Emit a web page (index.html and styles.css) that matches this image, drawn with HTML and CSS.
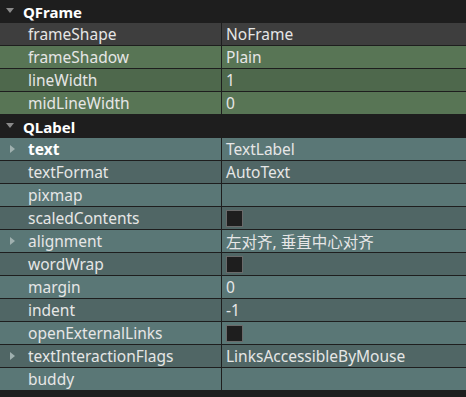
FILE: index.html
```html
<!DOCTYPE html>
<html lang="en">
<head>
  <meta charset="UTF-8">
  <title>Property Editor</title>
  <link rel="stylesheet" href="styles.css">
</head>
<body>
  <div class="props">
    <div class="group">
      <span class="caret-down"></span>
      <span class="group-name">QFrame</span>
    </div>
    <div class="row gray">
      <div class="name">frameShape</div>
      <div class="value">NoFrame</div>
    </div>
    <div class="row green">
      <div class="name">frameShadow</div>
      <div class="value">Plain</div>
    </div>
    <div class="row green dark">
      <div class="name">lineWidth</div>
      <div class="value">1</div>
    </div>
    <div class="row green">
      <div class="name">midLineWidth</div>
      <div class="value">0</div>
    </div>

    <div class="group">
      <span class="caret-down"></span>
      <span class="group-name">QLabel</span>
    </div>
    <div class="row teal">
      <div class="name bold"><span class="caret-right"></span>text</div>
      <div class="value">TextLabel</div>
    </div>
    <div class="row teal dark">
      <div class="name">textFormat</div>
      <div class="value">AutoText</div>
    </div>
    <div class="row teal">
      <div class="name">pixmap</div>
      <div class="value"></div>
    </div>
    <div class="row teal dark">
      <div class="name">scaledContents</div>
      <div class="value"><span class="check"></span></div>
    </div>
    <div class="row teal">
      <div class="name"><span class="caret-right"></span>alignment</div>
      <div class="value">左对齐, 垂直中心对齐</div>
    </div>
    <div class="row teal dark">
      <div class="name">wordWrap</div>
      <div class="value"><span class="check"></span></div>
    </div>
    <div class="row teal">
      <div class="name">margin</div>
      <div class="value">0</div>
    </div>
    <div class="row teal dark">
      <div class="name">indent</div>
      <div class="value">-1</div>
    </div>
    <div class="row teal">
      <div class="name">openExternalLinks</div>
      <div class="value"><span class="check"></span></div>
    </div>
    <div class="row teal dark">
      <div class="name"><span class="caret-right"></span>textInteractionFlags</div>
      <div class="value">LinksAccessibleByMouse</div>
    </div>
    <div class="row teal">
      <div class="name">buddy</div>
      <div class="value"></div>
    </div>
  </div>
</body>
</html>
```

FILE: styles.css
```css
body {
  margin: 0;
  background: #1e1e1e;
  font-family: "Noto Sans", "Noto Sans CJK SC", sans-serif;
  font-size: 15.5px;
  color: #e6e6e6;
}

.props {
  width: 466px;
}

.group {
  height: 23px;
  display: flex;
  align-items: center;
  background: #1e1e1e;
  color: #ffffff;
  font-weight: bold;
  font-size: 15px;
}

.caret-down {
  width: 0;
  height: 0;
  margin: 0 9px 2px 6px;
  border-left: 4px solid transparent;
  border-right: 4px solid transparent;
  border-top: 5px solid #8a8a8a;
}

.row {
  height: 22px;
  display: flex;
  border-bottom: 1px solid #1e1e1e;
}

.name {
  width: 222px;
  border-right: 1px solid #1e1e1e;
  padding-left: 28px;
  box-sizing: border-box;
  display: flex;
  align-items: center;
  position: relative;
  flex-shrink: 0;
}

.name.bold {
  font-weight: bold;
  color: #ffffff;
}

.caret-right {
  position: absolute;
  left: 10px;
  top: 7px;
  width: 0;
  height: 0;
  border-top: 4px solid transparent;
  border-bottom: 4px solid transparent;
  border-left: 5px solid #9fb0af;
}

.value {
  flex: 1;
  padding-left: 4px;
  display: flex;
  align-items: center;
}

.check {
  width: 17px;
  height: 17px;
  box-sizing: border-box;
  background: #1e1e1e;
  border: 1px solid #6a6a6a;
}

.gray {
  background: #3e3e3e;
}

.green {
  background: #587555;
}

.green.dark {
  background: #4e684c;
}

.teal {
  background: #5a7776;
}

.teal.dark {
  background: #506665;
}
```
